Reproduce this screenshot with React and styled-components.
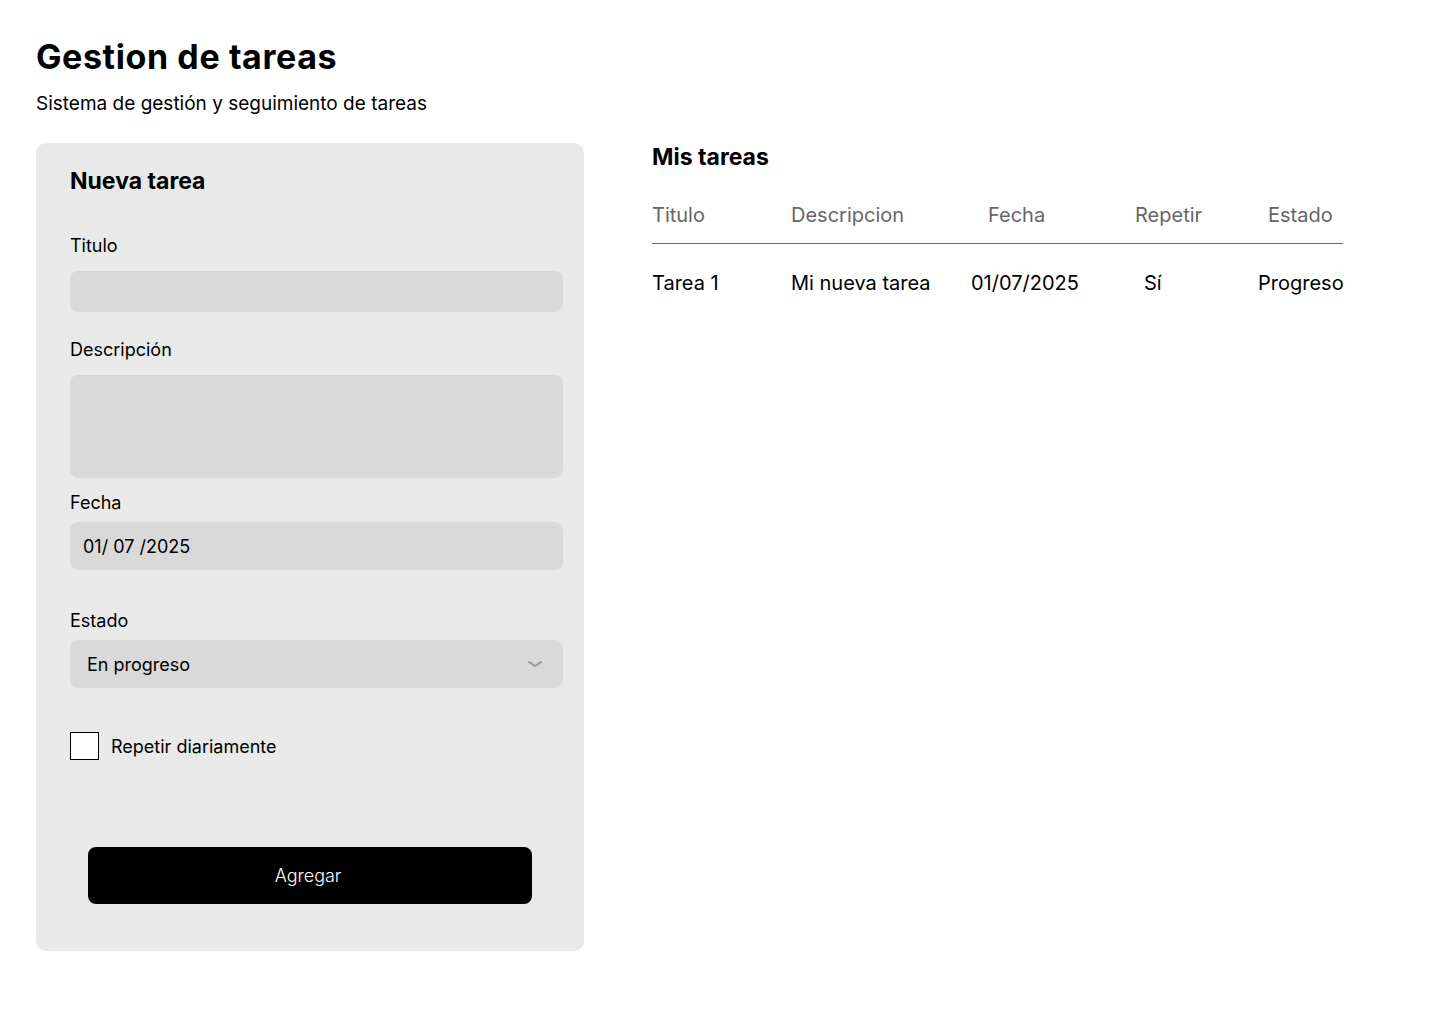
import React from "react";
import styled, { createGlobalStyle } from "styled-components";

const GlobalStyle = createGlobalStyle`
    body {
        margin      : 0;
        background  : #ffffff;
        font-family : Inter, "Noto Sans", sans-serif;
        color       : #000000;
    }
`;

const tasks = [
    { title: "Tarea 1", description: "Mi nueva tarea", date: "01/07/2025", repeat: "Sí", status: "Progreso" },
];

const App = () => {
    return (
        <>
            <GlobalStyle />
            <Page>
                <Title>Gestion de tareas</Title>
                <Subtitle>Sistema de gestión y seguimiento de tareas</Subtitle>

                <Layout>
                    <Card>
                        <CardTitle>Nueva tarea</CardTitle>

                        <Label $top={40}>Titulo</Label>
                        <Field $height={41} $space={14} />

                        <Label $top={27}>Descripción</Label>
                        <Field $height={103} $space={14} />

                        <Label $top={14}>Fecha</Label>
                        <Field $height={48} $space={8}>01/ 07 /2025</Field>

                        <Label $top={40}>Estado</Label>
                        <Field $height={48} $space={8} $indent={17}>
                            En progreso
                            <Chevron width="16" height="8" viewBox="0 0 16 8">
                                <path d="M2 2 L8 6 L14 2" fill="none" stroke="#9a9a9a" strokeWidth="2" strokeLinecap="round" />
                            </Chevron>
                        </Field>

                        <CheckRow>
                            <Box />
                            <span>Repetir diariamente</span>
                        </CheckRow>

                        <SubmitButton>Agregar</SubmitButton>
                    </Card>

                    <TaskList>
                        <ListTitle>Mis tareas</ListTitle>
                        <HeadRow>
                            <Cell>Titulo</Cell>
                            <Cell>Descripcion</Cell>
                            <Cell $shift={17}>Fecha</Cell>
                            <Cell>Repetir</Cell>
                            <Cell $shift={10}>Estado</Cell>
                        </HeadRow>
                        {tasks.map((task) => (
                            <DataRow key={task.title}>
                                <Cell>{task.title}</Cell>
                                <Cell>{task.description}</Cell>
                                <Cell>{task.date}</Cell>
                                <Cell $shift={9}>{task.repeat}</Cell>
                                <Cell>{task.status}</Cell>
                            </DataRow>
                        ))}
                    </TaskList>
                </Layout>
            </Page>
        </>
    );
};

export default App;

const Page = styled.div`
    padding : 36px 36px 0 36px;
`;

const Title = styled.h1`
    margin         : 0;
    font-size      : 34px;
    line-height    : 42px;
    font-weight    : 700;
    letter-spacing : 0.6px;
`;

const Subtitle = styled.p`
    margin      : 13px 0 0 0;
    font-size   : 19px;
    line-height : 25px;
    font-weight : 400;
`;

const Layout = styled.div`
    display     : flex;
    align-items : flex-start;
    gap         : 68px;
    margin-top  : 27px;
`;

const Card = styled.div`
    width            : 548px;
    box-sizing       : border-box;
    padding          : 24px 21px 47px 34px;
    background-color : #e9e9e9;
    border-radius    : 10px;
    display          : flex;
    flex-direction   : column;
`;

const CardTitle = styled.h2`
    margin      : 0;
    font-size   : 23px;
    line-height : 28px;
    font-weight : 700;
`;

const Label = styled.label`
    margin-top  : ${(p) => p.$top}px;
    font-size   : 18px;
    line-height : 22px;
`;

const Field = styled.div`
    margin-top       : ${(p) => p.$space}px;
    height           : ${(p) => p.$height}px;
    background-color : #d9d9d9;
    border-radius    : 8px;
    display          : flex;
    align-items      : center;
    justify-content  : space-between;
    padding          : 0 20px 0 ${(p) => p.$indent || 13}px;
    font-size        : 18px;
`;

const Chevron = styled.svg`
    display : block;
`;

const CheckRow = styled.div`
    margin-top  : 44px;
    display     : flex;
    align-items : center;
    gap         : 12px;
    font-size   : 18px;
`;

const Box = styled.div`
    width            : 29px;
    height           : 28px;
    box-sizing       : border-box;
    border           : 1px solid #000000;
    background-color : #ffffff;
`;

const SubmitButton = styled.button`
    margin-top       : 87px;
    margin-left      : 18px;
    width            : 444px;
    height           : 57px;
    border           : none;
    border-radius    : 8px;
    background-color : #000000;
    color            : #ffffff;
    font-family      : Inter, "Noto Sans", sans-serif;
    font-size        : 18px;
    font-weight      : 300;
    padding          : 0 4px 0 0;
`;

const TaskList = styled.div`
    width : 691px;
`;

const ListTitle = styled.h2`
    margin      : 0;
    font-size   : 23px;
    line-height : 28px;
    font-weight : 700;
`;

const HeadRow = styled.div`
    display               : grid;
    grid-template-columns : 139px 180px 164px 123px 85px;
    margin-top            : 32px;
    padding-bottom        : 16px;
    border-bottom         : 1px solid #666666;
    color                 : #666666;
    font-size             : 20px;
    line-height           : 24px;
`;

const DataRow = styled.div`
    display               : grid;
    grid-template-columns : 139px 180px 164px 123px 85px;
    margin-top            : 27px;
    font-size             : 20px;
    line-height           : 24px;
`;

const Cell = styled.div`
    padding-left : ${(p) => p.$shift || 0}px;
    white-space  : nowrap;
`;
